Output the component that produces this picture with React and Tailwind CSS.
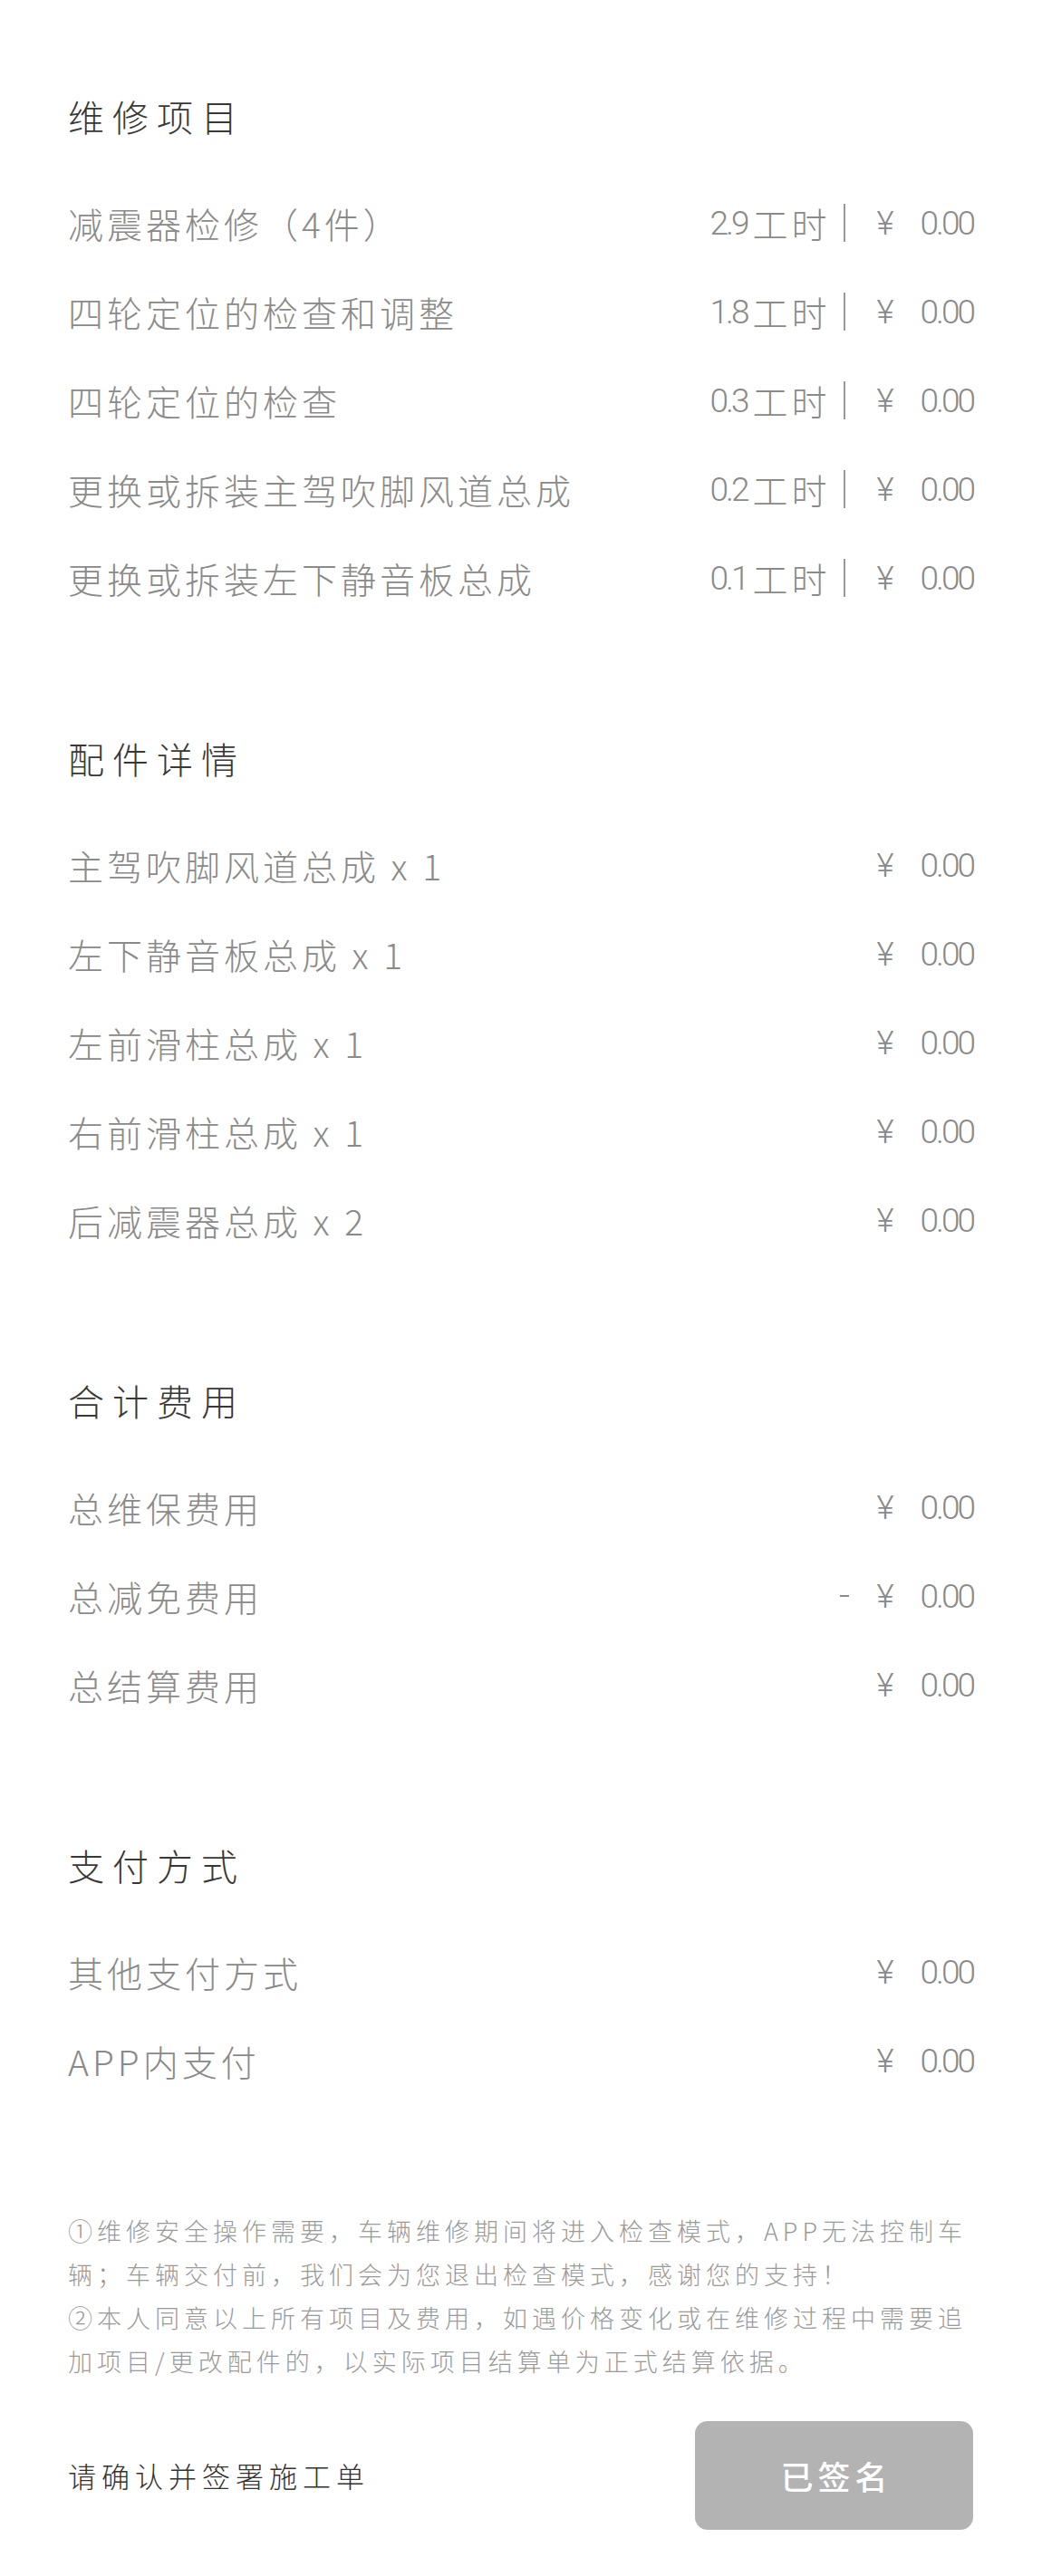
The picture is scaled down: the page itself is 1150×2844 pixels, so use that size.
import React from 'react';

const cjk = '"Noto Sans CJK SC", "Noto Sans", sans-serif';
const num = 'Roboto, "Noto Sans CJK SC", sans-serif';

const repairItems = [
  { name: '减震器检修（4件）', hours: '2.9' },
  { name: '四轮定位的检查和调整', hours: '1.8' },
  { name: '四轮定位的检查', hours: '0.3' },
  { name: '更换或拆装主驾吹脚风道总成', hours: '0.2' },
  { name: '更换或拆装左下静音板总成', hours: '0.1' },
];

const parts = [
  { name: '主驾吹脚风道总成', qty: 1 },
  { name: '左下静音板总成', qty: 1 },
  { name: '左前滑柱总成', qty: 1 },
  { name: '右前滑柱总成', qty: 1 },
  { name: '后减震器总成', qty: 2 },
];

const totals = [
  { name: '总维保费用' },
  { name: '总减免费用', minus: true },
  { name: '总结算费用' },
];

const payments = [{ name: '其他支付方式' }, { name: 'APP内支付' }];

function Price({ minus }) {
  return (
    <div className="flex items-center text-[#8a8a8a]" style={{ fontFamily: num }}>
      {minus && <span className="mr-[30px] h-[1.5px] w-[10px] bg-[#8a8a8a]"></span>}
      <span className="text-[37px] font-light leading-none">¥</span>
      <span className="ml-[29px] text-[37px] font-light leading-none tracking-[-3px]">0.00</span>
    </div>
  );
}

function Heading({ children }) {
  return (
    <div className="flex h-[98px] items-center">
      <h2 className="text-[40px] font-light tracking-[9px] text-[#383838]">{children}</h2>
    </div>
  );
}

function Section({ title, children, last }) {
  return (
    <section className={last ? 'pb-[115px]' : 'pb-[101px]'}>
      <Heading>{title}</Heading>
      <div className="mt-[20px]">{children}</div>
    </section>
  );
}

function Row({ label, children }) {
  return (
    <div className="flex h-[98px] items-center justify-between">
      <span className="text-[39px] font-light tracking-[4px] text-[#8a8a8a]">{label}</span>
      {children}
    </div>
  );
}

export default function App() {
  return (
    <div className="min-h-screen bg-white pt-[79px] pb-[51px]" style={{ fontFamily: cjk }}>
      <div className="pl-[75px] pr-[76px]">
        {/* 维修项目 */}
        <Section title="维修项目">
          {repairItems.map((item) => (
            <Row key={item.name} label={item.name}>
              <div className="flex items-center text-[#8a8a8a]">
                <span className="text-[37px] font-light leading-none tracking-[-3px]" style={{ fontFamily: num }}>
                  {item.hours}
                </span>
                <span className="ml-[6px] text-[39px] font-light tracking-[4px]">工时</span>
                <span className="ml-[15px] mr-[34px] h-[42px] w-[2px] bg-[#9a9a9a]"></span>
                <Price />
              </div>
            </Row>
          ))}
        </Section>

        {/* 配件详情 */}
        <Section title="配件详情">
          {parts.map((p) => (
            <Row key={p.name} label={`${p.name} x ${p.qty}`}>
              <Price />
            </Row>
          ))}
        </Section>

        {/* 合计费用 */}
        <Section title="合计费用">
          {totals.map((t) => (
            <Row key={t.name} label={t.name}>
              <Price minus={t.minus} />
            </Row>
          ))}
        </Section>

        {/* 支付方式 */}
        <Section title="支付方式" last>
          {payments.map((p) => (
            <Row key={p.name} label={p.name}>
              <Price />
            </Row>
          ))}
        </Section>

        {/* 说明 */}
        <div className="whitespace-nowrap text-[27px] font-light leading-[48px] tracking-[5px] text-[#9a9a9a]">
          <p>
            ①维修安全操作需要，车辆维修期间将进入检查模式，APP无法控制车
            <br />
            辆；车辆交付前，我们会为您退出检查模式，感谢您的支持！
          </p>
          <p>
            ②本人同意以上所有项目及费用，如遇价格变化或在维修过程中需要追
            <br />
            加项目/更改配件的，以实际项目结算单为正式结算依据。
          </p>
        </div>

        {/* 签署 */}
        <div className="mt-[42px] flex items-center justify-between">
          <span className="text-[31px] font-light tracking-[6px] text-[#333333]">请确认并签署施工单</span>
          <button className="flex h-[120px] w-[307px] items-center justify-center rounded-[14px] bg-[#b3b3b3] text-[36px] font-medium tracking-[5px] text-white">
            <span className="pl-[5px]">已签名</span>
          </button>
        </div>
      </div>
    </div>
  );
}
